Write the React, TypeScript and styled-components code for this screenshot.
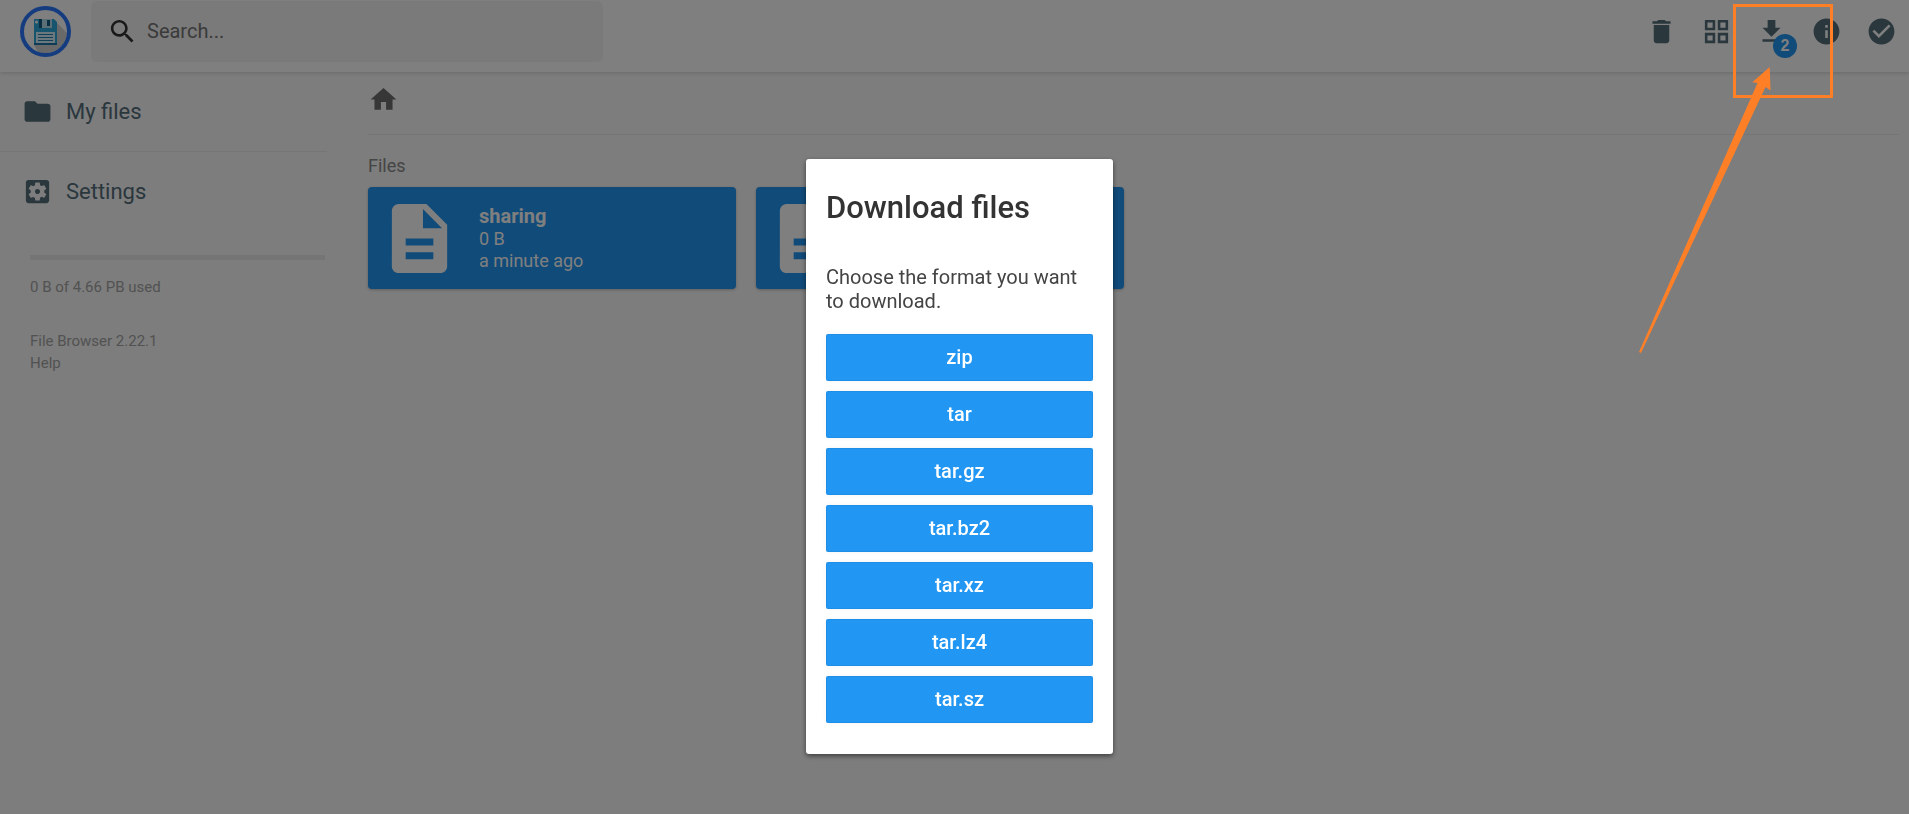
import React from "react";
import styled, { createGlobalStyle } from "styled-components";

const blue = "#2196f3";
const slate = "#546e7a";
const orange = "#ff7f27";

const GlobalStyle = createGlobalStyle`
  *, *::before, *::after { box-sizing: border-box; }
  body {
    margin: 0;
    background: #fafafa;
    color: #333;
    font-family: Roboto, "Liberation Sans", sans-serif;
  }
`;

const Page = styled.div`
  position: relative;
  min-height: 100vh;
  overflow: hidden;
`;

const Header = styled.header`
  position: relative;
  display: flex;
  align-items: center;
  height: 72px;
  padding: 0 0 10px 20px;
  background: #fff;
  box-shadow: 0 1px 4px rgba(0, 0, 0, 0.16);
`;

const LogoSvg = styled.svg`
  width: 51px;
  height: 51px;
  flex: none;
`;

const SearchBox = styled.label`
  display: flex;
  align-items: center;
  flex: 0 1 512px;
  height: 61px;
  margin: 0 auto 0 20px;
  padding-left: 16px;
  border-radius: 6px;
  background: #f5f5f5;
  gap: 9px;
  color: #333;
`;

const SearchInput = styled.input`
  flex: 1;
  min-width: 0;
  padding: 0;
  border: 0;
  outline: 0;
  background: transparent;
  font: 400 20px/24px Roboto, sans-serif;
  &::placeholder { color: #757575; opacity: 1; }
`;

const IconSvg = styled.svg<{ $size: number }>`
  display: block;
  flex: none;
  width: ${(p) => p.$size}px;
  height: ${(p) => p.$size}px;
  fill: currentColor;
`;

const Toolbar = styled.div`
  display: flex;
`;

const ToolButton = styled.button`
  position: relative;
  display: flex;
  align-items: center;
  justify-content: center;
  width: 55px;
  height: 55px;
  padding: 0;
  border: 0;
  background: transparent;
  color: ${slate};
`;

const Badge = styled.span`
  position: absolute;
  right: 2px;
  bottom: 1px;
  width: 24px;
  height: 24px;
  border-radius: 50%;
  background: ${blue};
  color: #fff;
  font-size: 16px;
  line-height: 24px;
  font-weight: 700;
  text-align: center;
`;

const Body = styled.div`
  display: flex;
`;

const Sidebar = styled.nav`
  flex: none;
  width: 327px;
`;

const NavLink = styled.a<{ $divided?: boolean }>`
  display: flex;
  align-items: center;
  height: 80px;
  padding-left: 22px;
  gap: 13px;
  border-bottom: 1px solid ${(p) => (p.$divided ? "rgba(0, 0, 0, 0.05)" : "transparent")};
  color: ${slate};
  font-size: 22px;
  line-height: 28px;
  text-decoration: none;
`;

const Usage = styled.div`
  margin: 23px 2px 0 30px;
  color: #a5a5a5;
  font-size: 15px;
  line-height: 22px;
`;

const UsageBar = styled.div`
  height: 5px;
  margin-bottom: 16px;
  background: #ebebeb;
`;

const Credits = styled.div`
  display: flex;
  flex-direction: column;
  align-items: flex-start;
  margin-top: 32px;
`;

const CreditLink = styled.a`
  color: inherit;
  text-decoration: none;
`;

const Main = styled.main`
  flex: 1;
  min-width: 0;
  padding: 0 10px 0 41px;
`;

const Breadcrumbs = styled.div`
  display: flex;
  height: 63px;
  padding-top: 12px;
  border-bottom: 1px solid rgba(0, 0, 0, 0.05);
`;

const HomeLink = styled.a`
  color: #6f6f6f;
`;

const SectionTitle = styled.h2`
  margin: 20px 0 10px;
  color: #8a8a8a;
  font-size: 18px;
  line-height: 22px;
  font-weight: 400;
`;

const FileGrid = styled.div`
  display: flex;
  gap: 20px;
`;

const FileCard = styled.article`
  display: flex;
  align-items: center;
  width: 368px;
  height: 102px;
  padding: 0 10px;
  gap: 18px;
  border-radius: 4px;
  background: ${blue};
  color: #fff;
  box-shadow: 0 1px 3px rgba(0, 0, 0, 0.24);
`;

const FileInfo = styled.div`
  font-size: 18px;
  line-height: 22px;
`;

const FileLine = styled.p<{ $strong?: boolean }>`
  margin: 0;
  font-size: ${(p) => (p.$strong ? "20px" : "18px")};
  line-height: ${(p) => (p.$strong ? "24px" : "22px")};
  font-weight: ${(p) => (p.$strong ? 700 : 400)};
`;

const Overlay = styled.div`
  position: fixed;
  inset: 0;
  display: flex;
  align-items: flex-start;
  justify-content: center;
  padding: 159px 0 0 10px;
  background: rgba(0, 0, 0, 0.5);
`;

const Dialog = styled.section`
  width: 307px;
  padding: 29px 20px 31px;
  border-radius: 3px;
  background: #fff;
  box-shadow: 0 2px 5px rgba(0, 0, 0, 0.5);
`;

const DialogTitle = styled.h1`
  margin: 0;
  color: #333;
  font-size: 31px;
  line-height: 40px;
  font-weight: 500;
`;

const DialogText = styled.p`
  margin: 37px 0 21px;
  color: #444;
  font-size: 20px;
  line-height: 24px;
`;

const Formats = styled.div`
  display: flex;
  flex-direction: column;
  gap: 10px;
`;

const FormatButton = styled.button`
  height: 47px;
  padding: 0 0 2px;
  border: 1px solid rgba(0, 0, 0, 0.05);
  border-radius: 2px;
  background: ${blue};
  color: #fff;
  font: 500 20px/24px Roboto, sans-serif;
  box-shadow: 0 0 5px rgba(0, 0, 0, 0.05);
`;

const Callout = styled.svg`
  position: absolute;
  top: 0;
  right: 69px;
  width: 210px;
  height: 360px;
`;

const icons = {
  search:
    "M15.5 14h-.79l-.28-.27C15.41 12.59 16 11.11 16 9.5 16 5.91 13.09 3 9.5 3S3 5.91 3 9.5 5.91 16 9.5 16c1.61 0 3.09-.59 4.23-1.57l.27.28v.79l5 4.99L20.49 19l-4.99-5zm-6 0C7.01 14 5 11.99 5 9.5S7.01 5 9.5 5 14 7.01 14 9.5 11.99 14 9.5 14z",
  delete:
    "M6 19c0 1.1.9 2 2 2h8c1.1 0 2-.9 2-2V7H6v12zM19 4h-3.5l-1-1h-5l-1 1H5v2h14V4z",
  grid:
    "M3 3v8h8V3H3zm6 6H5V5h4v4zm-6 4v8h8v-8H3zm6 6H5v-4h4v4zm4-16v8h8V3h-8zm6 6h-4V5h4v4zm-6 4v8h8v-8h-8zm6 6h-4v-4h4v4z",
  download: "M19 9h-4V3H9v6H5l7 7 7-7zM5 18v2h14v-2H5z",
  info:
    "M12 2C6.48 2 2 6.48 2 12s4.48 10 10 10 10-4.48 10-10S17.52 2 12 2zm1 15h-2v-6h2v6zm0-8h-2V7h2v2z",
  check:
    "M12 2C6.48 2 2 6.48 2 12s4.48 10 10 10 10-4.48 10-10S17.52 2 12 2zm-2 15l-5-5 1.41-1.41L10 14.17l7.59-7.59L19 8l-9 9z",
  folder:
    "M10 4H4c-1.1 0-1.99.9-1.99 2L2 18c0 1.1.9 2 2 2h16c1.1 0 2-.9 2-2V8c0-1.1-.9-2-2-2h-8l-2-2z",
  settings:
    "M12 10c-1.1 0-2 .9-2 2s.9 2 2 2 2-.9 2-2-.9-2-2-2zm7-7H5c-1.11 0-2 .9-2 2v14c0 1.1.89 2 2 2h14c1.11 0 2-.9 2-2V5c0-1.1-.89-2-2-2zm-1.75 9c0 .23-.02.46-.05.68l1.48 1.16c.13.11.17.3.08.45l-1.4 2.42c-.09.15-.27.21-.43.15l-1.74-.7c-.36.28-.76.51-1.18.69l-.26 1.85c-.03.17-.18.3-.35.3h-2.8c-.17 0-.32-.13-.35-.29l-.26-1.85c-.43-.18-.82-.41-1.18-.69l-1.74.7c-.16.06-.34 0-.43-.15l-1.4-2.42c-.09-.15-.05-.34.08-.45l1.48-1.16c-.03-.23-.05-.46-.05-.69 0-.23.02-.46.05-.68l-1.48-1.16c-.13-.11-.17-.3-.08-.45l1.4-2.42c.09-.15.27-.21.43-.15l1.74.7c.36-.28.76-.51 1.18-.69l.26-1.85c.03-.17.18-.3.35-.3h2.8c.17 0 .32.13.35.29l.26 1.85c.43.18.82.41 1.18.69l1.74-.7c.16-.06.34 0 .43.15l1.4 2.42c.09.15.05.34-.08.45l-1.48 1.16c.03.23.05.46.05.69z",
  home: "M10 20v-6h4v6h5v-8h3L12 3 2 12h3v8z",
  file:
    "M14 2H6c-1.1 0-1.99.9-1.99 2L4 20c0 1.1.89 2 1.99 2H18c1.1 0 2-.9 2-2V8l-6-6zm2 16H8v-2h8v2zm0-4H8v-2h8v2zm-3-5V3.5L18.5 9H13z",
};

function Icon({ name, size = 31 }: { name: keyof typeof icons; size?: number }) {
  return (
    <IconSvg $size={size} viewBox="0 0 24 24" aria-hidden="true">
      <path d={icons[name]} />
    </IconSvg>
  );
}

function Logo() {
  return (
    <LogoSvg viewBox="0 0 51 51" role="img" aria-label="File Browser">
      <circle cx="25.5" cy="25.5" r="23.5" fill="#fff" />
      <path d="M35 15L47 27A22 22 0 0 1 18 46L14 39L37 38Z" fill="#d2d2d2" />
      <circle cx="25.5" cy="25.5" r="23.5" fill="none" stroke="#2979ff" strokeWidth="4" />
      <path d="M14 13H34L37 16V39H14Z" fill="#2ea8dc" />
      <path d="M14 37H37V39H14Z" fill="#1e78a8" />
      <rect x="19" y="13" width="13" height="9" fill="#b9dfee" />
      <rect x="19" y="13" width="3" height="9" fill="#155e86" />
      <rect x="27" y="14" width="3" height="6" fill="#155e86" />
      <circle cx="16.5" cy="16" r="1.5" fill="#fff" />
      <rect x="16" y="26" width="19" height="11" fill="#d7f0fb" />
      <path d="M18 28.5H33M18 31.5H33M18 34.5H33" stroke="#2583ae" strokeWidth="1" />
    </LogoSvg>
  );
}

const formats = ["zip", "tar", "tar.gz", "tar.bz2", "tar.xz", "tar.lz4", "tar.sz"];

export default function App() {
  return (
    <Page>
      <GlobalStyle />
      <Header>
        <Logo />
        <SearchBox>
          <Icon name="search" />
          <SearchInput type="text" placeholder="Search..." aria-label="Search" />
        </SearchBox>
        <Toolbar>
          <ToolButton aria-label="Delete"><Icon name="delete" /></ToolButton>
          <ToolButton aria-label="Switch view"><Icon name="grid" /></ToolButton>
          <ToolButton aria-label="Download">
            <Icon name="download" />
            <Badge>2</Badge>
          </ToolButton>
          <ToolButton aria-label="Info"><Icon name="info" /></ToolButton>
          <ToolButton aria-label="Select multiple"><Icon name="check" /></ToolButton>
        </Toolbar>
      </Header>
      <Body>
        <Sidebar>
          <NavLink href="#files" $divided><Icon name="folder" />My files</NavLink>
          <NavLink href="#settings"><Icon name="settings" />Settings</NavLink>
          <Usage>
            <UsageBar />
            0 B of 4.66 PB used
            <Credits>
              <CreditLink href="#about">File Browser 2.22.1</CreditLink>
              <CreditLink href="#help">Help</CreditLink>
            </Credits>
          </Usage>
        </Sidebar>
        <Main>
          <Breadcrumbs>
            <HomeLink href="#home" aria-label="Home"><Icon name="home" /></HomeLink>
          </Breadcrumbs>
          <SectionTitle>Files</SectionTitle>
          <FileGrid>
            <FileCard>
              <Icon name="file" size={83} />
              <FileInfo>
                <FileLine $strong>sharing</FileLine>
                <FileLine>0 B</FileLine>
                <FileLine>a minute ago</FileLine>
              </FileInfo>
            </FileCard>
            <FileCard>
              <Icon name="file" size={83} />
            </FileCard>
          </FileGrid>
        </Main>
      </Body>
      <Overlay>
        <Dialog role="dialog" aria-labelledby="download-title">
          <DialogTitle id="download-title">Download files</DialogTitle>
          <DialogText>Choose the format you want to download.</DialogText>
          <Formats>
            {formats.map((format) => (
              <FormatButton key={format}>{format}</FormatButton>
            ))}
          </Formats>
        </Dialog>
      </Overlay>
      <Callout viewBox="1630 0 210 360" aria-hidden="true">
        <rect x="1734.5" y="5.5" width="97" height="91" fill="none" stroke={orange} strokeWidth="3" />
        <path d="M1769.7 67L1752.3 82.3L1757.5 83L1639 352L1641 353L1765.5 87L1770.5 90.5Z" fill={orange} />
      </Callout>
    </Page>
  );
}
